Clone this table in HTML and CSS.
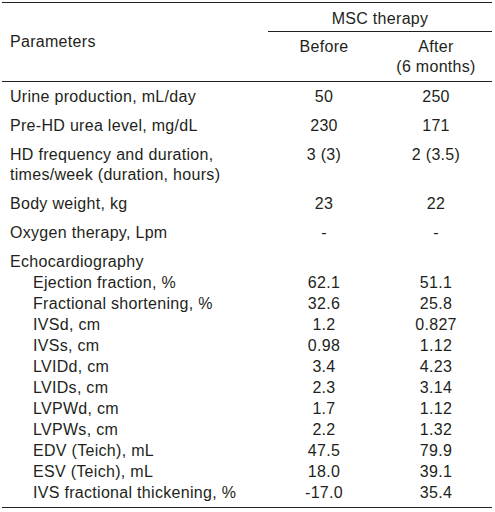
FILE: index.html
```
<!DOCTYPE html>
<html lang="en">
<head>
    <meta charset="UTF-8">
    <title>MSC therapy parameters</title>
    <link rel="stylesheet" href="styles.css">
</head>
<body>
    <table class="params">
        <colgroup>
            <col class="col-label">
            <col class="col-val">
            <col class="col-val">
        </colgroup>
        <thead>
            <tr class="head-top">
                <th rowspan="2" class="label head-label">Parameters</th>
                <th colspan="2" class="group">MSC therapy</th>
            </tr>
            <tr class="head-sub">
                <th>Before</th>
                <th>After<br>(6 months)</th>
            </tr>
        </thead>
        <tbody>
            <tr class="main">
                <td class="label">Urine production, mL/day</td>
                <td>50</td>
                <td>250</td>
            </tr>
            <tr class="main">
                <td class="label">Pre-HD urea level, mg/dL</td>
                <td>230</td>
                <td>171</td>
            </tr>
            <tr class="main">
                <td class="label">HD frequency and duration,<br>times/week (duration, hours)</td>
                <td>3 (3)</td>
                <td>2 (3.5)</td>
            </tr>
            <tr class="main">
                <td class="label">Body weight, kg</td>
                <td>23</td>
                <td>22</td>
            </tr>
            <tr class="main">
                <td class="label">Oxygen therapy, Lpm</td>
                <td>-</td>
                <td>-</td>
            </tr>
            <tr class="main section">
                <td class="label">Echocardiography</td>
                <td></td>
                <td></td>
            </tr>
            <tr class="sub"><td class="label">Ejection fraction, %</td><td>62.1</td><td>51.1</td></tr>
            <tr class="sub"><td class="label">Fractional shortening, %</td><td>32.6</td><td>25.8</td></tr>
            <tr class="sub"><td class="label">IVSd, cm</td><td>1.2</td><td>0.827</td></tr>
            <tr class="sub"><td class="label">IVSs, cm</td><td>0.98</td><td>1.12</td></tr>
            <tr class="sub"><td class="label">LVIDd, cm</td><td>3.4</td><td>4.23</td></tr>
            <tr class="sub"><td class="label">LVIDs, cm</td><td>2.3</td><td>3.14</td></tr>
            <tr class="sub"><td class="label">LVPWd, cm</td><td>1.7</td><td>1.12</td></tr>
            <tr class="sub"><td class="label">LVPWs, cm</td><td>2.2</td><td>1.32</td></tr>
            <tr class="sub"><td class="label">EDV (Teich), mL</td><td>47.5</td><td>79.9</td></tr>
            <tr class="sub"><td class="label">ESV (Teich), mL</td><td>18.0</td><td>39.1</td></tr>
            <tr class="sub last"><td class="label">IVS fractional thickening, %</td><td>-17.0</td><td>35.4</td></tr>
        </tbody>
    </table>
</body>
</html>
```

FILE: styles.css
```
body {
    margin: 0;
    background: #fff;
    font-family: 'Liberation Sans', Arial, sans-serif;
    color: #231f20;
}

/* 表格整体 */
.params {
    margin: 2px 0 0 2px;
    width: 490px;
    border-collapse: collapse;
    table-layout: fixed;
    font-size: 16px;
    letter-spacing: 0.3px;
    line-height: 20px;
    border-top: 1px solid #231f20;
    border-bottom: 1px solid #231f20;
}

.col-label { width: 266px; }
.col-val { width: 112px; }

.params th,
.params td {
    padding: 0;
    font-weight: normal;
    text-align: center;
    vertical-align: top;
}

.params .label {
    text-align: left;
    padding-left: 8px;
}

/* 表头 */
.head-top th {
    padding-top: 5.5px;
    padding-bottom: 2.5px;
}

.head-top .head-label {
    vertical-align: middle;
    padding-top: 0;
    padding-bottom: 0;
}

.group {
    border-bottom: 1px solid #231f20;
}

.head-sub th {
    padding-top: 5px;
    padding-bottom: 4px;
}

thead {
    border-bottom: 1px solid #231f20;
}

/* 主要行 */
.main td {
    padding-top: 5px;
    padding-bottom: 4px;
}

.main.section td {
    padding-bottom: 0;
}

/* 超声心动图子项 */
.sub td {
    line-height: 21px;
}

.sub .label {
    padding-left: 31px;
}

.sub.last td {
    padding-bottom: 4px;
}
```
